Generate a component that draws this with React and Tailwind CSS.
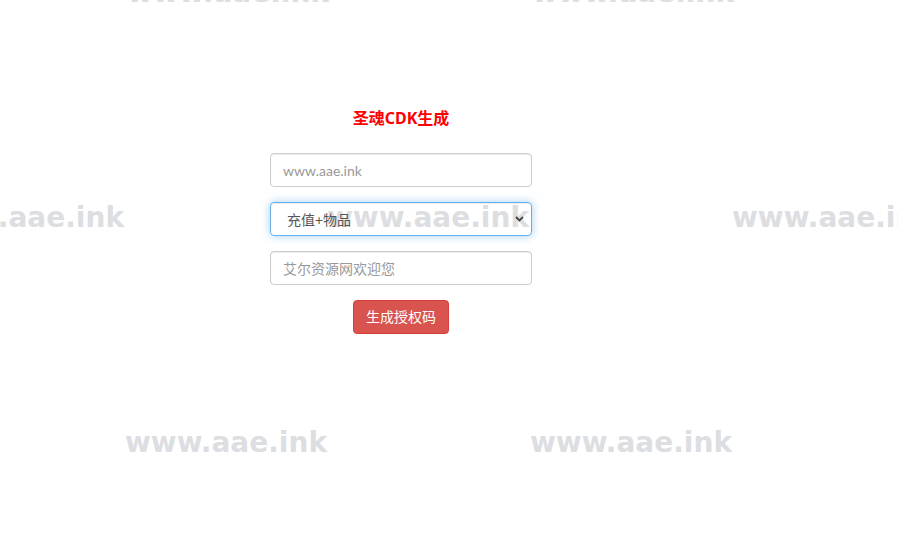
import React from "react";

const wm = "absolute whitespace-nowrap leading-none font-bold text-[28px] text-[#dcdee2] [font-family:'DejaVu_Sans',sans-serif]";

const inputCls =
  "h-[34px] w-full rounded-[4px] border border-[#cccccc] bg-white px-[12px] text-[14px] text-[#555] placeholder:text-[#999] shadow-[inset_0_1px_1px_rgba(0,0,0,0.075)] outline-none [font-family:'Lato','Noto_Sans_CJK_SC',sans-serif]";

export default function App() {
  return (
    <div className="relative w-[898px] h-[554px] overflow-hidden bg-white [font-family:'Noto_Sans','Noto_Sans_CJK_SC',sans-serif]">
      <div className="pointer-events-none absolute inset-0">
        <span className={`${wm} left-[127px] top-[-21px]`}>www.aae.ink</span>
        <span className={`${wm} left-[532px] top-[-21px]`}>www.aae.ink</span>
        <span className={`${wm} left-[-78px] top-[204px]`}>www.aae.ink</span>
        <span className={`${wm} left-[327px] top-[204px]`}>www.aae.ink</span>
        <span className={`${wm} left-[732px] top-[204px]`}>www.aae.ink</span>
        <span className={`${wm} left-[125px] top-[429px]`}>www.aae.ink</span>
        <span className={`${wm} left-[530px] top-[429px]`}>www.aae.ink</span>
      </div>

      <div className="relative flex flex-col ml-[270px] w-[262px] pt-[107px]">
        <h1 className="text-center text-[16px] leading-[22px] font-bold text-[#ff0000]">
          圣魂CDK生成
        </h1>
        <div className="flex flex-col gap-[15px] mt-[24px]">
          <input className={inputCls} placeholder="www.aae.ink" />
          <div className="relative">
            <select
              className="h-[34px] w-full appearance-none rounded-[4px] border border-[#66afe9] pl-[16px] text-[14px] text-[#555] bg-transparent outline-none shadow-[inset_0_1px_1px_rgba(0,0,0,0.075),0_0_8px_rgba(102,175,233,0.6)] [font-family:'Lato','Noto_Sans_CJK_SC',sans-serif]"
              defaultValue="a"
            >
              <option value="a">充值+物品</option>
            </select>
            <svg
              className="pointer-events-none absolute right-[8px] top-[14px]"
              width="9"
              height="6"
              viewBox="0 0 9 6"
            >
              <path d="M1 1 L4.5 4.5 L8 1" fill="none" stroke="#444" strokeWidth="1.8" />
            </svg>
          </div>
          <input className={inputCls} placeholder="艾尔资源网欢迎您" />
          <div className="flex justify-center">
            <button className="h-[34px] px-[12px] rounded-[4px] border border-[#d43f3a] bg-[#d9534f] text-white text-[14px] leading-none">
              生成授权码
            </button>
          </div>
        </div>
      </div>
    </div>
  );
}
